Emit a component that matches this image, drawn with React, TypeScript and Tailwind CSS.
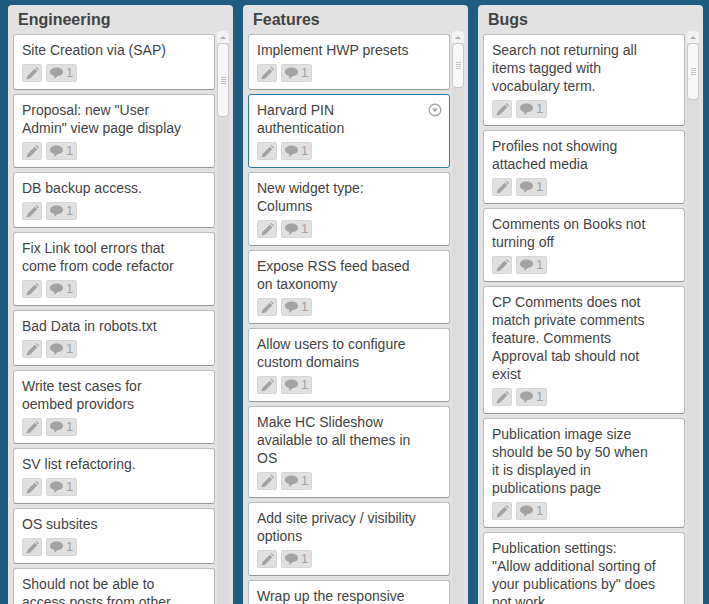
import React from 'react';

interface ListData {
  title: string;
  thumb: string;
  cards: string[];
}

const lists: ListData[] = [
  {
    title: 'Engineering',
    thumb: 'h-[74px]',
    cards: [
      'Site Creation via (SAP)',
      'Proposal: new "User Admin" view page display',
      'DB backup access.',
      'Fix Link tool errors that come from code refactor',
      'Bad Data in robots.txt',
      'Write test cases for oembed providors',
      'SV list refactoring.',
      'OS subsites',
      'Should not be able to access posts from other sites',
    ],
  },
  {
    title: 'Features',
    thumb: 'h-[45px]',
    cards: [
      'Implement HWP presets',
      'Harvard PIN authentication',
      'New widget type: Columns',
      'Expose RSS feed based on taxonomy',
      'Allow users to configure custom domains',
      'Make HC Slideshow available to all themes in OS',
      'Add site privacy / visibility options',
      'Wrap up the responsive theme work',
    ],
  },
  {
    title: 'Bugs',
    thumb: 'h-[57px]',
    cards: [
      'Search not returning all items tagged with vocabulary term.',
      'Profiles not showing attached media',
      'Comments on Books not turning off',
      'CP Comments does not match private comments feature. Comments Approval tab should not exist',
      'Publication image size should be 50 by 50 when it is displayed in publications page',
      'Publication settings: "Allow additional sorting of your publications by" does not work',
    ],
  },
];

const Badges = () => (
  <div className="flex gap-1 mt-[5px]">
    <div className="w-5 h-[18px] bg-[#e0e0e0] border border-[#d6d6d6] rounded-[2px] flex items-center justify-center">
      <svg width="13" height="13" viewBox="0 0 12 12">
        <path d="M0.5 11.5 L1.5 8 L8 1.5 L10.5 4 L4 10.5 Z M8.8 0.7 L9.6 0 L12 2.4 L11.3 3.2 Z" fill="#a3a3a3" />
      </svg>
    </div>
    <div className="w-[31px] h-[18px] bg-[#e0e0e0] border border-[#d6d6d6] rounded-[2px] flex items-center pl-[3px] gap-[3px] text-[13px] text-[#a3a3a3]">
      <svg width="13" height="12" viewBox="0 0 12 11">
        <path d="M6 0.5 C9.2 0.5 12 2 12 4.6 C12 7 9.4 8.4 6.6 8.4 C6.2 9.2 5 10.4 3.4 10.6 C4 9.8 4.2 8.9 4.2 8.2 C1.8 7.8 0 6.5 0 4.6 C0 2 2.8 0.5 6 0.5 Z" fill="#a3a3a3" />
      </svg>
      <span>1</span>
    </div>
  </div>
);

const Card = ({ text, active }: { text: string; active: boolean }) => (
  <div className={`relative shrink-0 bg-white rounded-[3px] border pl-2 pr-[27px] pt-[6px] pb-[7px] ${active ? 'border-[#2a7bac]' : 'border-[#bdbdbd] border-b-[#999]'}`}>
    <div className="text-[14px] leading-[18px] text-[#444]">{text}</div>
    {active && (
      <svg className="absolute top-[8px] right-[7px]" width="14" height="14" viewBox="0 0 14 14">
        <circle cx="7" cy="7" r="5.8" fill="none" stroke="#a8a8a8" strokeWidth="1.4" />
        <path d="M4.2 5.4 H9.8 L7 9.4 Z" fill="#a8a8a8" />
      </svg>
    )}
    <Badges />
  </div>
);

const Scrollbar = ({ thumb }: { thumb: string }) => (
  <div className="w-3 shrink-0 flex flex-col bg-[#dedcdb] rounded-t-[4px]">
    <div className="h-3 bg-[#f2f2f2] rounded-t-[4px] flex items-center justify-center">
      <div className="w-0 h-0 border-l-[3px] border-r-[3px] border-b-[3px] border-l-transparent border-r-transparent border-b-[#b0b0b0]" />
    </div>
    <div className={`${thumb} bg-[#f7f7f7] border border-[#c8c8c8] rounded-[4px] flex flex-col items-center justify-center gap-px`}>
      <div className="w-[5px] h-px bg-[#c4c4c4]" />
      <div className="w-[5px] h-px bg-[#c4c4c4]" />
      <div className="w-[5px] h-px bg-[#c4c4c4]" />
      <div className="w-[5px] h-px bg-[#c4c4c4]" />
    </div>
  </div>
);

const App: React.FC = () => (
  <div className="h-[604px] w-[709px] overflow-hidden bg-[#1f5c82] flex items-start gap-[10px] pl-2 pt-[5px] font-['Liberation_Sans',Arial,sans-serif]">
    {lists.map((list) => (
      <div key={list.title} className="w-[225px] h-[640px] shrink-0 bg-[#e2e2e2] rounded-[4px] flex flex-col pl-[5px] pr-1">
        <h2 className="h-[26px] pl-[5px] pt-[4px] text-[16px] leading-[22px] font-bold text-[#444]">{list.title}</h2>
        <div className="flex gap-[2px] min-h-0">
          <div className="w-[202px] shrink-0 flex flex-col gap-1 pt-[3px]">
            {list.cards.map((text) => (
              <Card key={text} text={text} active={text === 'Harvard PIN authentication'} />
            ))}
          </div>
          <Scrollbar thumb={list.thumb} />
        </div>
      </div>
    ))}
  </div>
);

export default App;
